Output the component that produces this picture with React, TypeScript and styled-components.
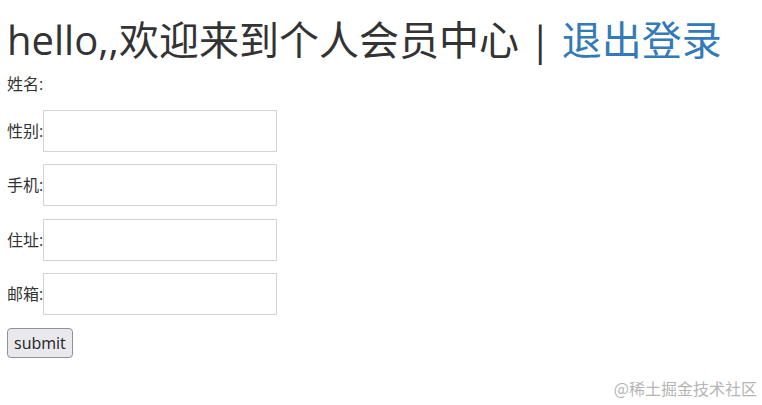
import React from "react";
import styled, { createGlobalStyle } from "styled-components";

const Global = createGlobalStyle`
  html, body { margin: 0; padding: 0; background: #fff; }
  body {
    padding: 8px 7px;
    font-family: "Open Sans", "Noto Sans CJK SC", sans-serif;
    color: #333;
  }
`;

const Page = styled.div`
  position: relative;
  width: 748px;
  height: 389px;
`;

const Title = styled.h1`
  margin: 7px 0 8px;
  font-size: 40px;
  line-height: 50px;
  font-weight: 400;
  color: #333;
  white-space: nowrap;
`;

const Link = styled.a`
  color: #337ab7;
  text-decoration: none;
`;

const Form = styled.form`
  display: flex;
  flex-direction: column;
  align-items: flex-start;
`;

const Row = styled.div<{ $gap: number }>`
  display: flex;
  align-items: center;
  margin-bottom: ${(p) => p.$gap}px;
`;

const Label = styled.label`
  font-size: 16px;
  line-height: 22px;
  color: #333;
`;

const Input = styled.input`
  box-sizing: border-box;
  width: 234px;
  height: 42px;
  margin: 0;
  border: 1px solid #d4d4d4;
  background: #fff;
  outline: none;
`;

const Button = styled.button`
  box-sizing: border-box;
  height: 30px;
  padding: 0 6px;
  font-family: "Open Sans", sans-serif;
  font-size: 16px;
  color: #222;
  background: #e9e9ed;
  border: 1px solid #8f8f9d;
  border-radius: 4px;
`;

const Watermark = styled.div`
  position: absolute;
  right: -2px;
  bottom: 4px;
  font-size: 16px;
  color: #b5b5b5;
  font-family: "Noto Sans CJK SC", sans-serif;
`;

export default function App() {
  return (
    <>
      <Global />
      <Page>
        <Title>
          hello,,欢迎来到个人会员中心 | <Link href="#">退出登录</Link>
        </Title>
        <Form onSubmit={(e) => e.preventDefault()}>
          <Row $gap={15}>
            <Label>姓名:</Label>
          </Row>
          <Row $gap={12}>
            <Label>性别:</Label>
            <Input />
          </Row>
          <Row $gap={13}>
            <Label>手机:</Label>
            <Input />
          </Row>
          <Row $gap={12}>
            <Label>住址:</Label>
            <Input />
          </Row>
          <Row $gap={13}>
            <Label>邮箱:</Label>
            <Input />
          </Row>
          <Button type="submit">submit</Button>
        </Form>
        <Watermark>@稀土掘金技术社区</Watermark>
      </Page>
    </>
  );
}
